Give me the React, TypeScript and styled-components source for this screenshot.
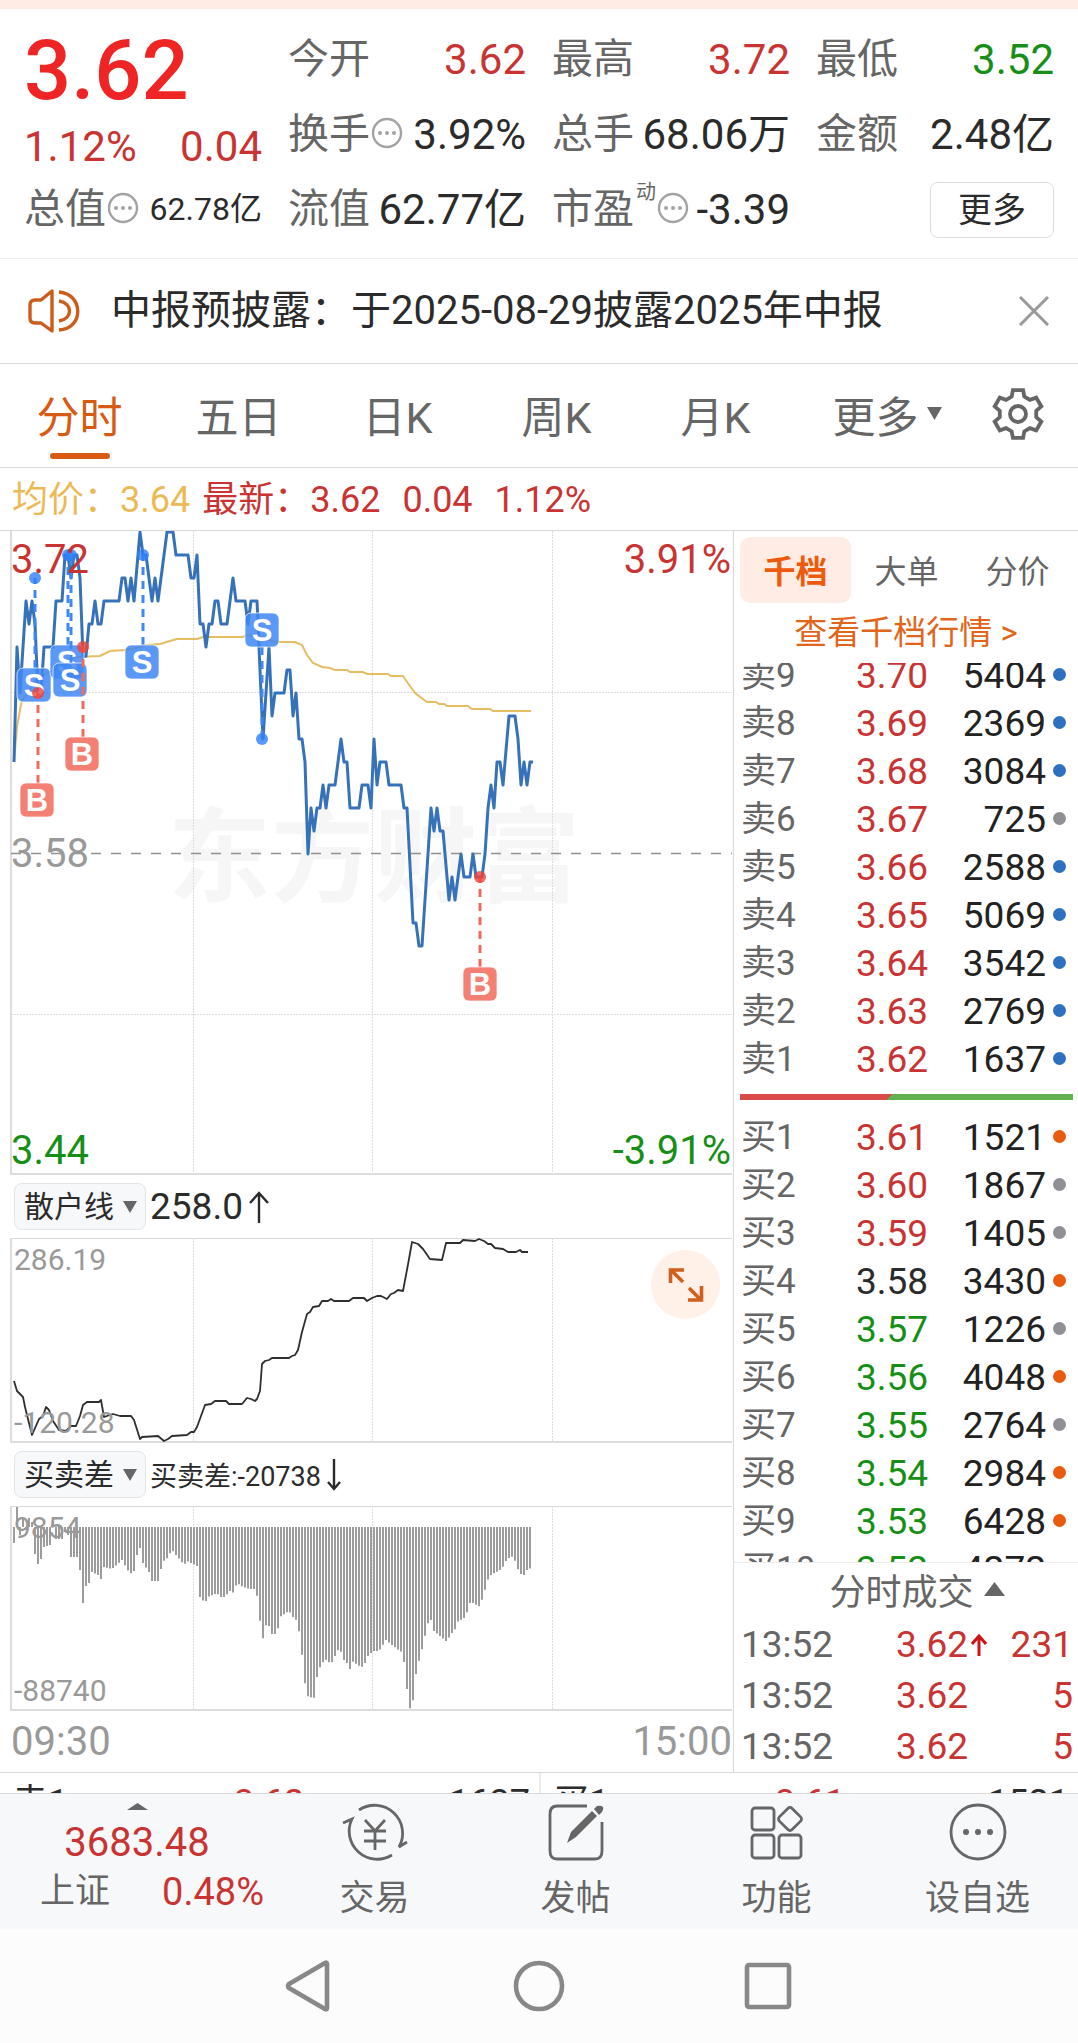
import React from 'react';
import styled, { createGlobalStyle, css } from 'styled-components';

const color = {
  red: '#c93432',
  hotRed: '#ee2524',
  green: '#178f17',
  orange: '#d95a12',
  yellow: '#ecb955',
  ink: '#2b2b2b',
  label: '#666666',
  mute: '#999999',
  line: '#d9d9d9',
  soft: '#ececec',
  peach: '#ffede5',
  blue: '#3672b9',
};

const GlobalStyle = createGlobalStyle`
  *, *::before, *::after { box-sizing: border-box; }
  body {
    margin: 0;
    background: #ffffff;
    color: ${color.ink};
    font-family: Roboto, "Noto Sans CJK SC", sans-serif;
  }
  button, select {
    margin: 0;
    padding: 0;
    border: 0;
    background: none;
    color: inherit;
    font: inherit;
    cursor: pointer;
  }
  svg { display: block; }
`;

type Tone = 'red' | 'green' | 'ink' | 'yellow';

/* ---------- header ---------- */

const TopStrip = styled.div`
  height: 9px;
  background: ${color.peach};
`;

const Summary = styled.header`
  display: grid;
  grid-template-columns: repeat(4, minmax(0, 1fr));
  grid-template-rows: repeat(3, 75px);
  column-gap: 26px;
  padding: 13px 24px 11px 24px;
  border-bottom: 1px solid ${color.soft};
`;

const Headline = styled.div`
  grid-row: span 2;
  color: ${color.red};
`;

const BigPrice = styled.div`
  color: ${color.hotRed};
  font-size: 83px;
  font-weight: 500;
  line-height: 98px;
`;

const Change = styled.div`
  display: flex;
  justify-content: space-between;
  font-size: 42px;
  line-height: 54px;
`;

const StatCell = styled.div`
  display: flex;
  align-items: center;
  justify-content: space-between;
  line-height: 75px;
  white-space: nowrap;
`;

const StatLabel = styled.span`
  display: flex;
  align-items: center;
  color: ${color.label};
  font-size: 41px;
`;

const Sup = styled.sup`
  align-self: flex-start;
  margin: 8px 0 0 2px;
  font-size: 20px;
  line-height: 24px;
`;

const StatValue = styled.span<{ $tone?: Tone; $size?: number }>`
  color: ${(p) => color[p.$tone ?? 'ink']};
  font-size: ${(p) => p.$size ?? 42}px;
`;

const MoreButton = styled.button`
  align-self: center;
  justify-self: end;
  width: 124px;
  height: 56px;
  border: 1px solid #dedede;
  border-radius: 8px;
  font-size: 34px;
  line-height: 48px;
`;

const Notice = styled.div`
  display: flex;
  align-items: center;
  height: 105px;
  padding: 0 29px 0 28px;
  border-bottom: 1px solid ${color.line};
`;

const NoticeText = styled.p`
  flex: 1;
  margin: 0 0 0 31px;
  font-size: 40px;
  line-height: 56px;
  white-space: nowrap;
`;

/* ---------- period tabs ---------- */

const Tabs = styled.nav`
  display: grid;
  grid-template-columns: repeat(5, minmax(0, 159fr)) 184fr 78fr;
  height: 104px;
  padding-right: 21px;
  border-bottom: 1px solid ${color.line};
`;

const Tab = styled.button<{ $active?: boolean }>`
  display: flex;
  align-items: center;
  justify-content: center;
  gap: 8px;
  position: relative;
  padding-bottom: 4px;
  color: ${(p) => (p.$active ? color.orange : color.label)};
  font-size: 43px;
  white-space: nowrap;
  ${(p) =>
    p.$active &&
    css`
      &::after {
        content: '';
        position: absolute;
        bottom: 8px;
        left: calc(50% - 30px);
        width: 60px;
        height: 6px;
        border-radius: 3px;
        background: ${color.orange};
      }
    `}
`;

const Legend = styled.div`
  display: flex;
  gap: 22px;
  height: 63px;
  padding-left: 12px;
  border-bottom: 1px solid ${color.line};
  color: ${color.red};
  font-size: 36px;
  line-height: 64px;
  white-space: nowrap;
`;

const Average = styled.span`
  margin-right: -10px;
  color: ${color.yellow};
`;

/* ---------- charts ---------- */

const Main = styled.main`
  display: grid;
  grid-template-columns: minmax(0, 1fr) 345px;
`;

const Charts = styled.section`
  min-width: 0;
`;

const Plot = styled.div`
  position: relative;
  svg.plot {
    width: 100%;
    height: auto;
  }
`;

const PlotLabel = styled.span<{ $v: 'top' | 'middle' | 'bottom'; $right?: boolean; $small?: boolean; $c: string }>`
  position: absolute;
  ${(p) => (p.$right ? 'right: 2px;' : `left: ${p.$small ? 14 : 11}px;`)}
  ${(p) => p.$v === 'top' && `top: ${p.$small ? 2 : 9}px;`}
  ${(p) => p.$v === 'middle' && 'top: calc(50% - 19px);'}
  ${(p) => p.$v === 'bottom' && `bottom: ${p.$small ? 0 : 4}px;`}
  color: ${(p) => p.$c};
  font-size: ${(p) => (p.$small ? 30 : 40)}px;
  line-height: 40px;
`;

const IndicatorBar = styled.div<{ $small?: boolean }>`
  display: flex;
  align-items: center;
  gap: 4px;
  height: 63px;
  padding-left: 14px;
  font-size: ${(p) => (p.$small ? 27 : 37)}px;
`;

const Picker = styled.label`
  display: flex;
  align-items: center;
  position: relative;
  svg {
    position: absolute;
    right: 9px;
    pointer-events: none;
  }
`;

const Select = styled.select`
  width: 132px;
  height: 47px;
  padding-left: 9px;
  appearance: none;
  border: 1px solid #e2e4e7;
  border-radius: 8px;
  background: #f7f8fa;
  font-size: 30px;
`;

const Reading = styled.span`
  display: flex;
  align-items: center;
  gap: 6px;
`;

const ExpandButton = styled.button`
  display: grid;
  place-items: center;
  position: absolute;
  top: 12px;
  right: 13px;
  width: 69px;
  height: 69px;
  border-radius: 50%;
  background: #fff0e8;
`;

const TimeAxis = styled.div`
  display: flex;
  justify-content: space-between;
  padding: 0 1px 0 11px;
  color: ${color.mute};
  font-size: 40px;
  line-height: 61px;
`;

/* ---------- order book ---------- */

const Side = styled.aside`
  display: flex;
  flex-direction: column;
  border-left: 1px solid ${color.line};
`;

const BookTabs = styled.div`
  display: grid;
  grid-template-columns: repeat(3, 1fr);
  height: 72px;
  padding: 6px 5px 0 6px;
`;

const BookTab = styled.button<{ $active?: boolean }>`
  padding-bottom: 2px;
  border-radius: 10px;
  background: ${(p) => (p.$active ? color.peach : 'none')};
  color: ${(p) => (p.$active ? '#ee5a0c' : color.label)};
  font-size: 32px;
  font-weight: ${(p) => (p.$active ? 700 : 400)};
`;

const BookLink = styled.a`
  color: #e2651c;
  font-size: 33px;
  line-height: 60px;
  text-align: center;
  text-decoration: none;
`;

const BookView = styled.div`
  flex: 1 1 0;
  min-height: 0;
  overflow: hidden;
`;

const BookScroll = styled.div`
  margin-top: -11px;
`;

const Table = styled.table`
  width: 100%;
  border-collapse: collapse;
  table-layout: fixed;
`;

const Cell = styled.td<{ $c?: string; $w?: number; $right?: boolean; $h?: number }>`
  width: ${(p) => (p.$w ? `${p.$w}px` : 'auto')};
  height: ${(p) => p.$h ?? 48}px;
  padding: 0;
  color: ${(p) => p.$c ?? '#222222'};
  font-size: 37px;
  line-height: ${(p) => p.$h ?? 48}px;
  text-align: ${(p) => (p.$right ? 'right' : 'left')};
  white-space: nowrap;
  &:first-child { padding-left: 7px; }
`;

const LevelCell = styled(Cell)`
  font-size: 35px;
`;

const VolumeCell = styled(Cell)`
  padding-right: 5px;
`;

const Dot = styled.i<{ $c: string }>`
  display: block;
  width: 13px;
  height: 13px;
  margin: 0 0 4px 7px;
  border-radius: 50%;
  background: ${(p) => p.$c};
`;

const Ratio = styled.div`
  height: 6px;
  margin: 10px 5px 14px 6px;
  background: linear-gradient(135deg, #d84b49 0 45%, #5fb24f 45%);
`;

const Trades = styled.section`
  border-top: 1px solid ${color.soft};
`;

const TradesToggle = styled.button`
  display: flex;
  align-items: center;
  justify-content: center;
  gap: 10px;
  width: 100%;
  height: 56px;
  padding: 0 12px 4px 34px;
  color: ${color.label};
  font-size: 36px;
`;

const TradePrice = styled.span`
  display: flex;
  align-items: center;
  gap: 3px;
`;

/* ---------- bottom ---------- */

const QuoteStrip = styled.div`
  display: grid;
  grid-template-columns: repeat(2, minmax(0, 1fr));
  height: 21px;
  overflow: hidden;
  border-top: 1px solid ${color.line};
`;

const QuoteHalf = styled.div`
  display: grid;
  grid-template-columns: 222px 1fr auto;
  padding: 0 9px 0 12px;
  font-size: 36px;
  line-height: 60px;
  & + & { border-left: 2px solid ${color.soft}; }
`;

const Toned = styled.span<{ $tone: Tone }>`
  color: ${(p) => color[p.$tone]};
`;

const BottomBar = styled.nav`
  display: grid;
  grid-template-columns: 274px repeat(4, minmax(0, 1fr));
  height: 136px;
  border-top: 1px solid ${color.line};
  background: #f6f8fa;
`;

const IndexButton = styled.button`
  display: flex;
  flex-direction: column;
  align-items: center;
  padding-top: 9px;
  color: ${color.red};
`;

const IndexValue = styled.span`
  margin-top: 9px;
  font-size: 40px;
  line-height: 48px;
`;

const IndexRow = styled.span`
  display: flex;
  justify-content: space-between;
  align-items: center;
  width: 100%;
  padding: 0 10px 0 40px;
  font-size: 38px;
  line-height: 50px;
`;

const IndexName = styled.span`
  color: ${color.label};
  font-size: 35px;
`;

const NavButton = styled.button`
  display: flex;
  flex-direction: column;
  align-items: center;
  padding-top: 8px;
  color: ${color.label};
  font-size: 35px;
  line-height: 74px;
`;

const SystemBar = styled.div`
  display: flex;
  justify-content: center;
  align-items: center;
  gap: 170px;
  height: 114px;
  background: #fcfcfc;
`;

const SystemButton = styled.button`
  width: 60px;
  height: 60px;
`;

/* ---------- icons ---------- */

const InfoIcon = () => (
  <svg width="34" height="38" viewBox="0 0 34 38" fill="none" aria-hidden="true">
    <circle cx="17" cy="17" r="14" stroke="#a3a3a3" strokeWidth="2.4" />
    <g fill="#a3a3a3">
      <circle cx="10" cy="17" r="2" />
      <circle cx="17" cy="17" r="2" />
      <circle cx="24" cy="17" r="2" />
    </g>
  </svg>
);

const SpeakerIcon = () => (
  <svg width="52" height="46" viewBox="0 0 52 46" fill="none" stroke="#cc5c1c" strokeWidth="3.4" strokeLinejoin="round" aria-hidden="true">
    <path d="M24 3 L13 12 H7 Q2 12 2 17 V30 Q2 35 7 35 H13 L24 43 Z" />
    <path d="M31 4 C56 6 56 41 31 42" />
    <path d="M31 13 C45 15 45 31 31 33" />
  </svg>
);

const CloseIcon = () => (
  <svg width="30" height="30" viewBox="0 0 30 30" fill="none" stroke="#999" strokeWidth="3" aria-hidden="true">
    <path d="M1 1 L29 29 M29 1 L1 29" />
  </svg>
);

const Triangle = ({ w, h, up }: { w: number; h: number; up?: boolean }) => (
  <svg width={w} height={h} viewBox="0 0 10 10" preserveAspectRatio="none" fill="#666" aria-hidden="true">
    <path d={up ? 'M0 10 L5 0 L10 10 Z' : 'M0 0 L10 0 L5 10 Z'} />
  </svg>
);

const polar = (r: number, deg: number) => {
  const a = (deg * Math.PI) / 180;
  return `${(27 + r * Math.sin(a)).toFixed(2)},${(27 - r * Math.cos(a)).toFixed(2)}`;
};

const gearPoints = [0, 60, 120, 180, 240, 300]
  .flatMap((a) => [polar(18.5, a - 20), polar(24.5, a - 12), polar(24.5, a + 12), polar(18.5, a + 20)])
  .join(' ');

const GearIcon = () => (
  <svg width="54" height="54" viewBox="0 0 54 54" fill="none" stroke="#666" strokeWidth="3.8" aria-hidden="true">
    <polygon points={gearPoints} />
    <circle cx="27" cy="27" r="8" />
  </svg>
);

const Arrow = ({ down, h, w, c, sw }: { down?: boolean; h: number; w: number; c: string; sw: number }) => (
  <svg width={w} height={h} viewBox={`0 0 ${w} ${h}`} fill="none" stroke={c} strokeWidth={sw} aria-hidden="true">
    {down ? (
      <path d={`M${w / 2} 0 V${h - 2} M1 ${h - w / 2 - 2} L${w / 2} ${h - 2} L${w - 1} ${h - w / 2 - 2}`} />
    ) : (
      <path d={`M${w / 2} ${h} V2 M1 ${w / 2 + 2} L${w / 2} 2 L${w - 1} ${w / 2 + 2}`} />
    )}
  </svg>
);

const ExpandIcon = () => (
  <svg width="36" height="36" viewBox="0 0 36 36" fill="none" stroke="#d05f1e" strokeWidth="3.6" aria-hidden="true">
    <path d="M2.5 16 V3 H16 M3 3 L15 15" />
    <path d="M20 33 H33.5 V19 M33 33 L21 21" />
  </svg>
);

const navSvg = { width: 66, height: 60, viewBox: '0 0 66 60', fill: 'none', stroke: '#666', strokeWidth: 2.8 };

const TradeIcon = () => (
  <svg {...navSvg} aria-hidden="true">
    <path d="M17 8 A28 28 0 0 1 57 45 L65 40" />
    <path d="M50 53 A28 28 0 0 1 10 17 L1 21" />
    <path d="M23 18 L33 29 L43 18 M22 29 H44 M22 39 H44 M33 29 V48" />
  </svg>
);

const PostIcon = () => (
  <svg {...navSvg} aria-hidden="true">
    <path d="M44 4 H14 Q7 4 7 12 V49 Q7 57 14 57 H52 Q59 57 59 49 V20" />
    <path d="M24 41 L28 30 L49 9 L54 14 L33 35 Z" fill="#666" stroke="none" />
    <path d="M51 7 L54 4 Q58 3 60 5 Q61 7 59 10 L56 13 Z" fill="#666" stroke="none" />
  </svg>
);

const GridIcon = () => (
  <svg {...navSvg} aria-hidden="true">
    <rect x="8" y="6" width="22" height="22" rx="3" />
    <rect x="8" y="33" width="22" height="23" rx="3" />
    <rect x="35" y="33" width="22" height="23" rx="3" />
    <rect x="37" y="8" width="18" height="18" rx="3" transform="rotate(45 46 17)" />
  </svg>
);

const DotsIcon = () => (
  <svg {...navSvg} aria-hidden="true">
    <circle cx="33" cy="30" r="27" />
    <g fill="#666" stroke="none">
      <circle cx="21" cy="30" r="3" />
      <circle cx="33" cy="30" r="3" />
      <circle cx="45" cy="30" r="3" />
    </g>
  </svg>
);

/* ---------- chart data ---------- */

// [minute since open, ticks of 0.01 from the previous close of 3.58]
const priceTicks: [number, number][] = [
  [0, 4], [1, 9], [2, 7], [4, 11], [5, 10], [6, 11], [7, 10], [8, 7], [9, 7], [10, 9], [13, 9], [14, 11], [16, 11],
  [17, 13], [18, 13], [19, 12], [20, 13], [21, 13], [22, 12], [23, 8.6], [24, 8.6], [25, 10], [26, 10], [27, 11], [28, 10],
  [29, 10], [30, 11], [35, 11], [36, 12], [37, 12], [38, 11], [39, 12], [40, 11], [42, 14], [43, 13], [44, 13],
  [46, 11], [47, 12], [48, 11], [51, 14], [53, 14], [54, 13], [58, 13], [59, 12], [60, 12], [61, 13], [62, 10],
  [63, 10], [64, 9], [65, 10], [66, 10], [67, 11], [68, 11], [69, 10], [71, 10], [73, 12], [74, 11], [77, 11],
  [78, 10], [79, 11], [81, 11], [83, 5], [85, 9], [86, 6], [87, 7], [90, 7], [91, 8], [92, 8], [93, 6], [94, 7],
  [95, 5], [96, 5], [97, 4], [98, 0], [99, 2], [100, 1], [101, 2], [102, 2], [103, 3], [104, 2], [105, 3], [107, 3],
  [109, 5], [110, 4], [111, 4], [112, 2], [115, 2], [116, 3], [118, 3], [119, 2], [120, 5], [121, 3], [122, 4],
  [124, 4], [125, 3], [129, 3], [130, 2], [131, 2], [133, -3], [134, -3], [135, -4], [136, -4], [139, 2], [140, 1],
  [141, 2], [142, 1], [143, 1], [145, -2], [146, -1], [147, -2], [149, 0], [150, -1], [152, -1], [153, 0], [154, -1],
  [156, -1], [157, 0], [158, 2], [159, 3], [160, 2], [161, 4], [162, 4], [163, 3], [165, 6], [167, 6], [168, 5],
  [169, 3], [170, 4], [171, 3], [172, 4], [173, 4],
];

const pricePoints = priceTicks.map(([m, t]) => `${14 + m * 3},${323 - t * 23}`).join(' ');

const averagePoints =
  '14,231 17,196 20,179 22,169 26,164 38,147 60,136 70,128 76,126 100,125 110,120 125,119 140,116 147,114 160,113 170,110 177,108 197,108 203,106 243,106 247,104 277,111 295,111 302,114 307,124 313,132 322,136 330,137 335,139 347,139 350,141 363,141 367,143 388,143 391,145 403,145 405,148 415,162 427,171 436,171 439,173 444,173 447,175 468,175 472,178 490,178 493,180 531,180';

const retailPoints =
  '14,143 17,153 23,159 25,169 32,197 39,181 43,178 46,169 49,172 53,183 59,192 66,193 71,188 76,188 80,178 83,167 87,164 99,164 101,162 104,179 113,176 120,178 131,178 134,182 140,201 142,199 158,198 164,203 168,201 172,198 187,197 191,194 194,194 197,189 205,167 211,166 215,163 226,163 229,166 242,166 247,160 251,161 255,163 257,161 260,153 262,126 265,123 269,122 272,120 289,120 292,118 295,117 298,112 302,94 307,76 310,74 313,69 319,68 322,63 328,63 331,61 334,63 349,63 353,60 364,60 367,63 372,60 377,58 381,58 387,61 391,56 394,55 398,52 403,53 409,21 412,4 418,6 423,11 430,21 442,22 446,5 460,5 463,2 475,3 479,1 484,3 488,6 491,6 495,10 503,11 508,14 516,14 520,12 522,14 528,14';

// [x, bar length below the zero line]
const diffKeys: [number, number][] = [
  [14, 16], [17, -20], [20, 8], [23, -9], [26, 3], [29, -9], [32, -5], [35, 27], [38, 37], [41, 32], [44, 20], [50, 18], [53, -5],
  [56, 12], [62, 12], [65, 5], [68, 8], [71, 30], [77, 30], [80, 43], [83, 76], [86, 59], [89, 56], [92, 45], [98, 48],
  [101, 52], [104, 40], [112, 42], [122, 33], [130, 47], [134, 44], [137, 28], [140, 21], [143, 36], [149, 45],
  [152, 54], [158, 54], [163, 34], [166, 33], [172, 23], [181, 34], [184, 38], [187, 34], [197, 39], [200, 70],
  [205, 76], [208, 70], [217, 66], [220, 70], [226, 70], [229, 62], [232, 68], [237, 56], [243, 60], [250, 62],
  [256, 62], [259, 82], [262, 117], [265, 100], [268, 95], [271, 107], [277, 107], [280, 90], [289, 84], [293, 90],
  [295, 90], [298, 98], [301, 117], [304, 149], [307, 171], [310, 166], [313, 179], [316, 154], [319, 142],
  [325, 132], [331, 137], [337, 125], [340, 120], [343, 134], [346, 131], [349, 146], [352, 134], [361, 140],
  [364, 139], [367, 130], [373, 124], [379, 124], [386, 113], [392, 118], [403, 126], [406, 153], [409, 180],
  [412, 184], [415, 152], [418, 137], [421, 127], [424, 113], [430, 88], [433, 103], [447, 115], [451, 106],
  [454, 106], [457, 95], [466, 90], [469, 76], [475, 76], [478, 81], [481, 76], [487, 56], [489, 49], [502, 42],
  [505, 35], [511, 29], [514, 31], [520, 48], [522, 46], [525, 49], [528, 40], [532, 43],
];

const lengthAt = (x: number) => {
  const i = Math.max(1, diffKeys.findIndex(([kx]) => kx >= x));
  const [x0, y0] = diffKeys[i - 1];
  const [x1, y1] = diffKeys[i];
  return y0 + ((y1 - y0) * (x - x0)) / (x1 - x0);
};

const diffPath = Array.from({ length: 173 }, (_, i) => 14 + i * 3)
  .map((x) => `M${x} 21 V${(21 + lengthAt(x)).toFixed(1)}`)
  .join(' ');

const Frame = ({ h, rows = [] }: { h: number; rows?: number[] }) => (
  <g fill="none">
    <g stroke="#dcdcdc" strokeDasharray="2 1">
      {[193.5, 372.5, 552.5].map((x) => (
        <path key={x} d={`M${x} 0 V${h}`} />
      ))}
      {rows.map((y) => (
        <path key={y} d={`M11 ${y} H732`} />
      ))}
    </g>
    <path d={`M11 0 V${h - 1} H732`} stroke="#dddddd" strokeWidth="2" />
  </g>
);

type MarkerProps = { kind: 'S' | 'B'; x: number; y: number; dotX: number; dotY: number };

const Marker = ({ kind, x, y, dotX, dotY }: MarkerProps) => {
  const c = kind === 'S' ? '#3f87f5' : '#f26a5c';
  const stop = dotY < y ? y - 17 : y + 17;
  return (
    <g>
      <path d={`M${dotX} ${stop} V${dotY}`} stroke={c} strokeWidth="3" strokeDasharray="8 6" />
      <circle cx={dotX} cy={dotY} r="6" fill={kind === 'S' ? '#2f80f5' : '#ee4438'} opacity="0.8" />
      <rect x={x - 17} y={y - 17} width="34" height="34" rx="6" fill={c} fillOpacity="0.85" stroke="#fff" strokeOpacity="0.7" />
      <text x={x} y={y + 11} textAnchor="middle" fill="#fff" fontFamily="'Liberation Sans', sans-serif" fontSize="31" fontWeight="700">
        {kind}
      </text>
    </g>
  );
};

const markers: MarkerProps[] = [
  { kind: 'S', x: 34, y: 154, dotX: 35, dotY: 47 },
  { kind: 'S', x: 67, y: 131, dotX: 68, dotY: 24 },
  { kind: 'S', x: 70, y: 149, dotX: 71, dotY: 24 },
  { kind: 'S', x: 142, y: 131, dotX: 143, dotY: 24 },
  { kind: 'S', x: 262, y: 99, dotX: 262, dotY: 208 },
  { kind: 'B', x: 37, y: 269, dotX: 38, dotY: 162 },
  { kind: 'B', x: 82, y: 223, dotX: 83, dotY: 116 },
  { kind: 'B', x: 480, y: 453, dotX: 480, dotY: 346 },
];

/* ---------- order data ---------- */

type Level = [name: string, price: string, volume: string, dot: string];

const B = '#2f70c0';
const G = '#8f8f94';
const O = '#e85b10';

const sells: Level[] = [
  ['卖9', '3.70', '5404', B],
  ['卖8', '3.69', '2369', B],
  ['卖7', '3.68', '3084', B],
  ['卖6', '3.67', '725', G],
  ['卖5', '3.66', '2588', B],
  ['卖4', '3.65', '5069', B],
  ['卖3', '3.64', '3542', B],
  ['卖2', '3.63', '2769', B],
  ['卖1', '3.62', '1637', B],
];

const buys: Level[] = [
  ['买1', '3.61', '1521', O],
  ['买2', '3.60', '1867', G],
  ['买3', '3.59', '1405', G],
  ['买4', '3.58', '3430', O],
  ['买5', '3.57', '1226', G],
  ['买6', '3.56', '4048', O],
  ['买7', '3.55', '2764', G],
  ['买8', '3.54', '2984', O],
  ['买9', '3.53', '6428', O],
  ['买10', '3.52', '4272', G],
];

const priceColor = (price: string) => {
  const v = Number(price);
  if (v === 3.58) return color.ink;
  return v > 3.58 ? color.red : color.green;
};

const Levels = ({ rows, label }: { rows: Level[]; label: string }) => (
  <Table aria-label={label}>
    <tbody>
      {rows.map(([name, price, volume, dot]) => (
        <tr key={name}>
          <LevelCell $w={122} $c={color.label}>{name}</LevelCell>
          <Cell $w={76} $c={priceColor(price)}>{price}</Cell>
          <Cell $right>{volume}</Cell>
          <Cell $w={32}><Dot $c={dot} /></Cell>
        </tr>
      ))}
    </tbody>
  </Table>
);

const trades = [
  { time: '13:52', price: '3.62', volume: '231', up: true },
  { time: '13:52', price: '3.62', volume: '5', up: false },
  { time: '13:52', price: '3.62', volume: '5', up: false },
];

type StatProps = { label: string; value: string; tone?: Tone; info?: boolean; sup?: string; size?: number };

const Stat = ({ label, value, tone, info, sup, size }: StatProps) => (
  <StatCell>
    <StatLabel>
      {label}
      {sup && <Sup>{sup}</Sup>}
      {info && <InfoIcon />}
    </StatLabel>
    <StatValue $tone={tone} $size={size}>{value}</StatValue>
  </StatCell>
);

export default function App() {
  return (
    <>
      <GlobalStyle />
      <TopStrip />
      <Summary>
        <Headline>
          <BigPrice>3.62</BigPrice>
          <Change>
            <span>1.12%</span>
            <span>0.04</span>
          </Change>
        </Headline>
        <Stat label="今开" value="3.62" tone="red" />
        <Stat label="最高" value="3.72" tone="red" />
        <Stat label="最低" value="3.52" tone="green" />
        <Stat label="换手" value="3.92%" info />
        <Stat label="总手" value="68.06万" />
        <Stat label="金额" value="2.48亿" />
        <Stat label="总值" value="62.78亿" info size={32} />
        <Stat label="流值" value="62.77亿" />
        <Stat label="市盈" value="-3.39" sup="动" info />
        <MoreButton type="button">更多</MoreButton>
      </Summary>

      <Notice>
        <SpeakerIcon />
        <NoticeText>中报预披露：于2025-08-29披露2025年中报</NoticeText>
        <button type="button" aria-label="关闭"><CloseIcon /></button>
      </Notice>

      <Tabs>
        <Tab type="button" $active>分时</Tab>
        <Tab type="button">五日</Tab>
        <Tab type="button">日K</Tab>
        <Tab type="button">周K</Tab>
        <Tab type="button">月K</Tab>
        <Tab type="button" aria-haspopup="menu">
          更多
          <Triangle w={15} h={13} />
        </Tab>
        <Tab type="button" aria-label="设置"><GearIcon /></Tab>
      </Tabs>

      <Legend>
        <Average>均价：3.64</Average>
        <span>最新：3.62</span>
        <span>0.04</span>
        <span>1.12%</span>
      </Legend>

      <Main>
        <Charts>
          <Plot>
            <svg className="plot" viewBox="0 0 733 644" role="img" aria-label="分时走势">
              <text x="168" y="363" fill="#f6f6f6" fontFamily="'Noto Sans CJK SC', sans-serif" fontSize="103" fontWeight="700">
                东方财富
              </text>
              <Frame h={644} rows={[161.5, 483.5]} />
              <path d="M11 322.5 H732" stroke="#909090" strokeWidth="1.6" strokeDasharray="10 10" />
              <polyline points={averagePoints} fill="none" stroke="#e6bd62" strokeWidth="2" />
              <polyline points={pricePoints} fill="none" stroke={color.blue} strokeWidth="3" strokeLinejoin="round" />
              {markers.map((m) => (
                <Marker key={`${m.x}-${m.y}`} {...m} />
              ))}
            </svg>
            <PlotLabel $v="top" $c={color.red}>3.72</PlotLabel>
            <PlotLabel $v="top" $right $c={color.red}>3.91%</PlotLabel>
            <PlotLabel $v="middle" $c={color.mute}>3.58</PlotLabel>
            <PlotLabel $v="bottom" $c={color.green}>3.44</PlotLabel>
            <PlotLabel $v="bottom" $right $c={color.green}>-3.91%</PlotLabel>
          </Plot>

          <IndicatorBar>
            <Picker>
              <Select aria-label="指标一" defaultValue="散户线">
                <option>散户线</option>
              </Select>
              <Triangle w={14} h={12} />
            </Picker>
            <Reading>
              258.0
              <Arrow h={32} w={20} c={color.ink} sw={2.4} />
            </Reading>
          </IndicatorBar>
          <Plot>
            <svg className="plot" viewBox="0 0 733 205" role="img" aria-label="散户线走势">
              <path d="M11 0.5 H732" stroke={color.line} />
              <Frame h={205} />
              <polyline points={retailPoints} fill="none" stroke="#2e2e2e" strokeWidth="1.8" strokeLinejoin="round" />
            </svg>
            <PlotLabel $v="top" $small $c={color.mute}>286.19</PlotLabel>
            <PlotLabel $v="bottom" $small $c={color.mute}>-120.28</PlotLabel>
            <ExpandButton type="button" aria-label="放大"><ExpandIcon /></ExpandButton>
          </Plot>

          <IndicatorBar $small>
            <Picker>
              <Select aria-label="指标二" defaultValue="买卖差">
                <option>买卖差</option>
              </Select>
              <Triangle w={14} h={12} />
            </Picker>
            <Reading>
              买卖差:-20738
              <Arrow down h={32} w={14} c={color.ink} sw={2.4} />
            </Reading>
          </IndicatorBar>
          <Plot>
            <svg className="plot" viewBox="0 0 733 205" role="img" aria-label="买卖差走势">
              <path d="M11 0.5 H732" stroke={color.line} />
              <Frame h={205} />
              <path d={diffPath} stroke="#9c9c9c" strokeWidth="2" />
            </svg>
            <PlotLabel $v="top" $small $c={color.mute}>9854</PlotLabel>
            <PlotLabel $v="bottom" $small $c={color.mute}>-88740</PlotLabel>
          </Plot>
          <TimeAxis>
            <span>09:30</span>
            <span>15:00</span>
          </TimeAxis>
        </Charts>

        <Side>
          <BookTabs>
            <BookTab type="button" $active>千档</BookTab>
            <BookTab type="button">大单</BookTab>
            <BookTab type="button">分价</BookTab>
          </BookTabs>
          <BookLink href="#depth">查看千档行情 &gt;</BookLink>
          <BookView>
            <BookScroll>
              <Levels rows={sells} label="卖盘" />
              <Ratio />
              <Levels rows={buys} label="买盘" />
            </BookScroll>
          </BookView>
          <Trades>
            <TradesToggle type="button">
              分时成交
              <Triangle w={21} h={14} up />
            </TradesToggle>
            <Table aria-label="分时成交">
              <tbody>
                {trades.map((t, i) => (
                  <tr key={i}>
                    <Cell $w={162} $h={51} $c={color.label}>{t.time}</Cell>
                    <Cell $h={51} $c={color.red}>
                      <TradePrice>
                        {t.price}
                        {t.up && <Arrow h={22} w={16} c="#cc1414" sw={3} />}
                      </TradePrice>
                    </Cell>
                    <VolumeCell $w={76} $h={51} $right $c={color.red}>{t.volume}</VolumeCell>
                  </tr>
                ))}
              </tbody>
            </Table>
          </Trades>
        </Side>
      </Main>

      <QuoteStrip>
        <QuoteHalf>
          <span>卖1</span>
          <Toned $tone="red">3.62</Toned>
          <span>1637</span>
        </QuoteHalf>
        <QuoteHalf>
          <span>买1</span>
          <Toned $tone="red">3.61</Toned>
          <span>1521</span>
        </QuoteHalf>
      </QuoteStrip>

      <BottomBar>
        <IndexButton type="button">
          <Triangle w={21} h={7} up />
          <IndexValue>3683.48</IndexValue>
          <IndexRow>
            <IndexName>上证</IndexName>
            <span>0.48%</span>
          </IndexRow>
        </IndexButton>
        <NavButton type="button"><TradeIcon />交易</NavButton>
        <NavButton type="button"><PostIcon />发帖</NavButton>
        <NavButton type="button"><GridIcon />功能</NavButton>
        <NavButton type="button"><DotsIcon />设自选</NavButton>
      </BottomBar>

      <SystemBar>
        <SystemButton type="button" aria-label="返回">
          <svg width="60" height="60" viewBox="0 0 60 60" fill="none" stroke="#888" strokeWidth="4.6" strokeLinejoin="round" aria-hidden="true">
            <path d="M48 8 V52 Q48 54 46 53 L10 32 Q8 30 10 28 L46 7 Q48 6 48 8 Z" />
          </svg>
        </SystemButton>
        <SystemButton type="button" aria-label="主页">
          <svg width="60" height="60" viewBox="0 0 60 60" fill="none" stroke="#888" strokeWidth="4.6" aria-hidden="true">
            <circle cx="30" cy="30" r="23" />
          </svg>
        </SystemButton>
        <SystemButton type="button" aria-label="最近任务">
          <svg width="60" height="60" viewBox="0 0 60 60" fill="none" stroke="#888" strokeWidth="4.6" aria-hidden="true">
            <rect x="8" y="9" width="42" height="42" rx="2" />
          </svg>
        </SystemButton>
      </SystemBar>
    </>
  );
}
